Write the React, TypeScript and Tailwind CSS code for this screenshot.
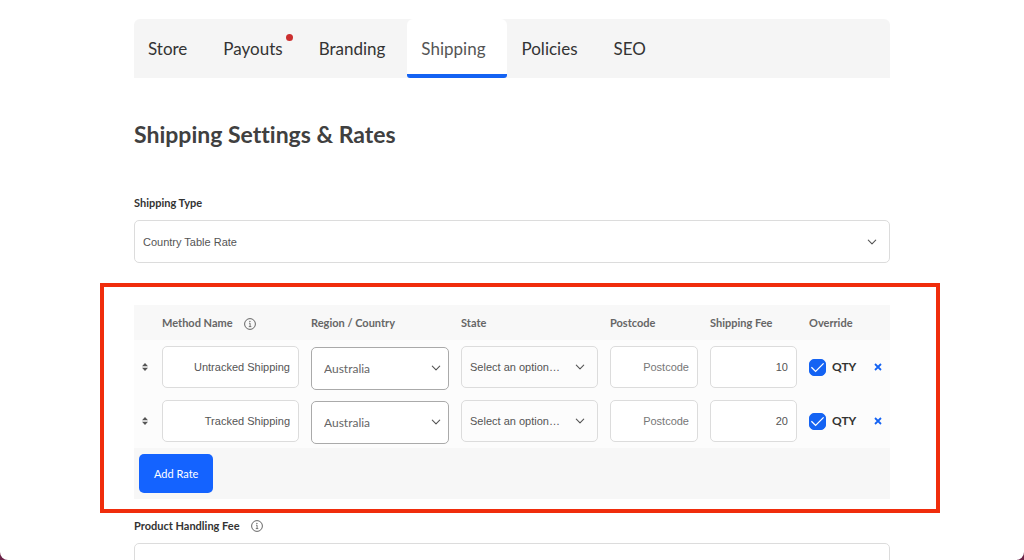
import { useState } from "react";
import type { ReactNode } from "react";

const tabs = ["Store", "Payouts", "Branding", "Shipping", "Policies", "SEO"];

const initialRates = [
  { id: 1, name: "Untracked Shipping", fee: "10" },
  { id: 2, name: "Tracked Shipping", fee: "20" },
];

function Chevron({ className }: { className: string }) {
  return (
    <svg
      viewBox="0 0 10 10"
      className={`pointer-events-none absolute size-2.5 fill-none stroke-[#555] ${className}`}
      strokeWidth="1.1"
      strokeLinecap="round"
      strokeLinejoin="round"
      aria-hidden="true"
    >
      <path d="M1.3 3.2L5 6.8l3.7-3.6" />
    </svg>
  );
}

function InfoIcon() {
  return (
    <svg viewBox="0 0 12 12" className="size-3 fill-none stroke-[#555]" strokeWidth="0.9" aria-hidden="true">
      <circle cx="6" cy="6" r="5.4" />
      <path d="M5 5.2h1.1v3.3M4.8 8.6h2.5" strokeWidth="0.8" />
      <circle cx="5.9" cy="3.4" r="0.6" className="fill-[#555] stroke-none" />
    </svg>
  );
}

function SortIcon() {
  return (
    <svg viewBox="0 0 6 8" className="h-2 w-1.5 fill-[#555]" aria-hidden="true">
      <path d="M3 0l3 3.3H0zM3 8L0 4.7h6z" />
    </svg>
  );
}

function Th({ children }: { children?: ReactNode }) {
  return <th className="h-[35px] px-1.5 pt-0.5 pb-0 text-left font-bold whitespace-nowrap">{children}</th>;
}

const field =
  "block h-[42px] w-full appearance-none rounded-[5px] border border-[#dcdcdc] px-2 font-['Liberation_Sans',Arial,sans-serif] text-[11px] text-[#555] outline-none placeholder:text-[#777]";

export default function App() {
  const [active, setActive] = useState("Shipping");
  const [rates, setRates] = useState(initialRates);

  return (
    <div className="h-screen bg-[#6b2347] font-[Lato,sans-serif] text-[#333] [font-variant-ligatures:none]">
      <div className="h-full overflow-hidden rounded-b-[8px] bg-white">
        <main className="mx-auto max-w-[756px] pt-[19px]">
          <nav className="flex h-[59px] rounded-t-md bg-[#f5f5f5]">
            {tabs.map((tab) => (
              <button
                key={tab}
                type="button"
                onClick={() => setActive(tab)}
                className={`border-b-4 pt-1 pr-[22px] pl-3.5 text-[17px] ${
                  tab === active
                    ? "rounded-t-md rounded-b-[3px] border-[#1463f3] bg-white text-[#555]"
                    : "border-transparent text-[#333]"
                }`}
              >
                <span className="relative">
                  {tab}
                  {tab === "Payouts" && (
                    <span className="absolute -top-1 -right-2.5 size-[7px] rounded-full bg-[#cb2f2f]" />
                  )}
                </span>
              </button>
            ))}
          </nav>

          <h1 className="mt-10 text-[23px] leading-8 font-bold text-[#404040]">Shipping Settings &amp; Rates</h1>

          <label htmlFor="shipping-type" className="mt-[45px] block text-[11px] leading-4 font-bold">
            Shipping Type
          </label>
          <div className="relative mt-[9px]">
            <select
              id="shipping-type"
              className="block h-[43px] w-full appearance-none rounded-[5px] border border-[#dcdcdc] bg-white px-2 pt-px font-['Liberation_Sans',Arial,sans-serif] text-[11px] text-[#555] outline-none"
            >
              <option>Country Table Rate</option>
            </select>
            <Chevron className="top-[17px] right-[13px]" />
          </div>

          <section className="mt-5 -mr-[50px] -ml-[34px] border-4 border-[#f02d0c] pt-[18px] pr-[46px] pb-2.5 pl-[30px]">
            <table className="w-full table-fixed border-collapse">
              <colgroup>
                <col className="w-[22px]" />
                <col className="w-[149px]" />
                <col className="w-[150px]" />
                <col className="w-[149px]" />
                <col className="w-[100px]" />
                <col className="w-[99px]" />
                <col />
                <col className="w-6" />
              </colgroup>
              <thead className="bg-[#f8f8f8] text-[11px] text-[#666]">
                <tr>
                  <Th />
                  <Th>
                    <span className="flex items-center gap-[11px]">
                      Method Name <InfoIcon />
                    </span>
                  </Th>
                  <Th>Region / Country</Th>
                  <Th>State</Th>
                  <Th>Postcode</Th>
                  <Th>Shipping Fee</Th>
                  <Th>Override</Th>
                  <Th />
                </tr>
              </thead>
              <tbody className="bg-[#fcfcfc]">
                {rates.map((rate) => (
                  <tr key={rate.id}>
                    <td className="p-0">
                      <span className="flex justify-center">
                        <SortIcon />
                      </span>
                    </td>
                    <td className="p-1.5">
                      <input aria-label="Method name" defaultValue={rate.name} className={`${field} bg-white text-right`} />
                    </td>
                    <td className="px-1.5 pt-[7px] pb-1">
                      <div className="relative">
                        <select
                          aria-label="Region or country"
                          className="block h-[43px] w-full appearance-none rounded-[5px] border border-[#aaa] bg-white px-3 pt-px font-[Lato,sans-serif] text-xs text-[#666] outline-none"
                        >
                          <option>Australia</option>
                        </select>
                        <Chevron className="top-4 right-2" />
                      </div>
                    </td>
                    <td className="p-1.5">
                      <div className="relative">
                        <select aria-label="State" className={`${field} bg-[#fcfcfc]`}>
                          <option>Select an option…</option>
                        </select>
                        <Chevron className="top-4 right-[13px]" />
                      </div>
                    </td>
                    <td className="p-1.5">
                      <input aria-label="Postcode" placeholder="Postcode" className={`${field} bg-white text-right`} />
                    </td>
                    <td className="p-1.5">
                      <input aria-label="Shipping fee" defaultValue={rate.fee} className={`${field} bg-white text-right`} />
                    </td>
                    <td className="p-1.5">
                      <label className="flex items-center gap-1.5 text-xs font-bold">
                        <span className="relative block size-[17px]">
                          <input
                            type="checkbox"
                            defaultChecked
                            className="peer block size-[17px] appearance-none rounded-[5px] border border-[#aaa] bg-white checked:border-[#1463f3] checked:bg-[#1463f3]"
                          />
                          <svg
                            viewBox="0 0 17 17"
                            className="pointer-events-none absolute inset-0 hidden fill-none stroke-white peer-checked:block"
                            strokeWidth="1.3"
                            aria-hidden="true"
                          >
                            <path d="M2.4 8.2l4.2 4.2 8-8" />
                          </svg>
                        </span>
                        QTY
                      </label>
                    </td>
                    <td className="p-0">
                      <button
                        type="button"
                        aria-label="Remove rate"
                        onClick={() => setRates(rates.filter((r) => r.id !== rate.id))}
                        className="flex size-6 items-center justify-center"
                      >
                        <svg viewBox="0 0 8 8" className="size-2 stroke-[#1463f3]" strokeWidth="1.8" aria-hidden="true">
                          <path d="M1 1l6 6M7 1L1 7" />
                        </svg>
                      </button>
                    </td>
                  </tr>
                ))}
              </tbody>
              <tfoot className="bg-[#f7f7f7]">
                <tr>
                  <td colSpan={8} className="px-[5px] py-1.5">
                    <button
                      type="button"
                      onClick={() => setRates([...rates, { id: Date.now(), name: "", fee: "" }])}
                      className="block h-[39px] rounded-[5px] bg-[#1463ff] px-[15px] pt-px text-[11px] text-white"
                    >
                      Add Rate
                    </button>
                  </td>
                </tr>
              </tfoot>
            </table>
          </section>

          <div className="mt-[5px] flex items-center gap-[11px]">
            <label htmlFor="handling-fee" className="text-[11px] leading-4 font-bold">
              Product Handling Fee
            </label>
            <InfoIcon />
          </div>
          <input id="handling-fee" className={`${field} mt-[9px] bg-white`} />
        </main>
      </div>
    </div>
  );
}
